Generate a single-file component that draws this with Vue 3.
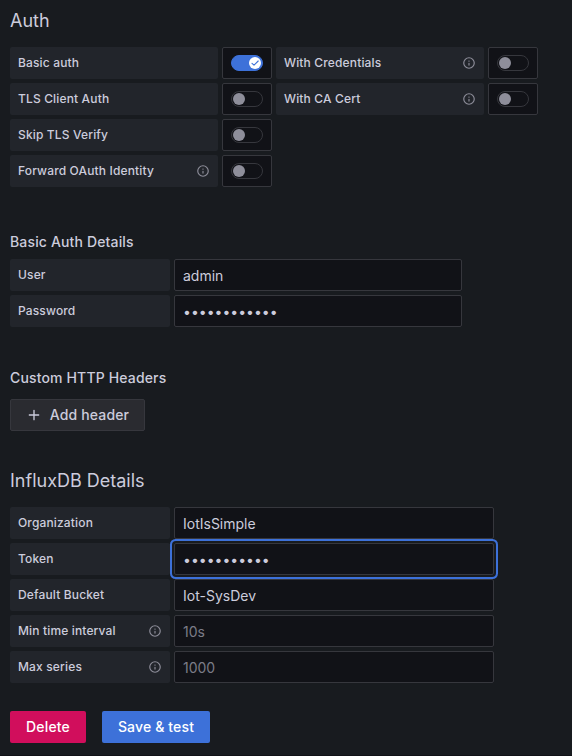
<script setup>
import { ref } from 'vue'

const authRows = ref([
  [
    { label: 'Basic auth', on: true },
    { label: 'With Credentials', info: true, on: false },
  ],
  [
    { label: 'TLS Client Auth', on: false },
    { label: 'With CA Cert', info: true, on: false },
  ],
  [{ label: 'Skip TLS Verify', on: false }],
  [{ label: 'Forward OAuth Identity', info: true, on: false }],
])

const basicFields = ref([
  { label: 'User', type: 'text', value: 'admin' },
  { label: 'Password', type: 'password', value: 'configured12' },
])

const influxFields = ref([
  { label: 'Organization', type: 'text', value: 'IotIsSimple' },
  { label: 'Token', type: 'password', value: 'tokenvalue1', active: true },
  { label: 'Default Bucket', type: 'text', value: 'Iot-SysDev' },
  { label: 'Min time interval', type: 'text', value: '', placeholder: '10s', info: true },
  { label: 'Max series', type: 'text', value: '', placeholder: '1000', info: true },
])

const infoPath =
  'M12,2A10,10,0,1,0,22,12,10.01114,10.01114,0,0,0,12,2Zm0,18a8,8,0,1,1,8-8A8.00917,8.00917,0,0,1,12,20Zm0-8.5a1,1,0,0,0-1,1v3a1,1,0,0,0,2,0v-3A1,1,0,0,0,12,11.5Zm0-4a1.25,1.25,0,1,0,1.25,1.25A1.25,1.25,0,0,0,12,7.5Z'
</script>

<template>
  <main class="page">
    <section class="auth">
      <h3 class="title">Auth</h3>
      <div class="rows">
        <div v-for="(row, i) in authRows" :key="i" class="row">
          <template v-for="item in row" :key="item.label">
            <div class="label wide">
              <span>{{ item.label }}</span>
              <svg v-if="item.info" class="info" viewBox="0 0 24 24"><path :d="infoPath" /></svg>
            </div>
            <div class="switch-box">
              <button
                type="button"
                role="switch"
                class="switch"
                :class="{ on: item.on }"
                :aria-checked="item.on"
                @click="item.on = !item.on"
              >
                <span class="knob">
                  <svg v-if="item.on" viewBox="0 0 12 12"><path d="M3 6.3 5 8.2 9.2 4" /></svg>
                </span>
              </button>
            </div>
          </template>
        </div>
      </div>
    </section>

    <section class="basic">
      <h6 class="subtitle">Basic Auth Details</h6>
      <div class="rows">
        <div v-for="field in basicFields" :key="field.label" class="row">
          <label class="label">{{ field.label }}</label>
          <input v-model="field.value" class="input short" :type="field.type" />
        </div>
      </div>
    </section>

    <section class="headers">
      <h6 class="subtitle">Custom HTTP Headers</h6>
      <button type="button" class="button secondary">
        <svg viewBox="0 0 24 24">
          <path d="M19,11H13V5a1,1,0,0,0-2,0v6H5a1,1,0,0,0,0,2h6v6a1,1,0,0,0,2,0V13h6a1,1,0,0,0,0-2Z" />
        </svg>
        <span>Add header</span>
      </button>
    </section>

    <section class="influx">
      <h3 class="title">InfluxDB Details</h3>
      <div class="rows">
        <div v-for="field in influxFields" :key="field.label" class="row">
          <label class="label">
            <span>{{ field.label }}</span>
            <svg v-if="field.info" class="info" viewBox="0 0 24 24"><path :d="infoPath" /></svg>
          </label>
          <input
            v-model="field.value"
            class="input"
            :class="{ active: field.active }"
            :type="field.type"
            :placeholder="field.placeholder"
          />
        </div>
      </div>
    </section>

    <footer class="actions">
      <button type="button" class="button danger">Delete</button>
      <button type="button" class="button primary">Save &amp; test</button>
    </footer>
  </main>
</template>

<style>
body {
  margin: 0;
  background: #181b1f;
}
</style>

<style scoped>
.page {
  box-sizing: border-box;
  height: 756px;
  overflow: hidden;
  padding: 9px 10px 0;
  border-bottom: 1px solid #111217;
  background: #181b1f;
  color: #ccccdc;
  font: 400 14px/22px Inter, sans-serif;
  letter-spacing: 0.15px;
}
.page * {
  box-sizing: border-box;
}
.title {
  margin: 0 0 14px;
  font-size: 18px;
  line-height: 24px;
  font-weight: 400;
  letter-spacing: 0;
}
.subtitle {
  margin: 0 0 6px;
  font-size: 14px;
  line-height: 22px;
  font-weight: 500;
}
.rows {
  display: flex;
  flex-direction: column;
  gap: 4px;
}
.row {
  display: flex;
  gap: 4px;
}
.label {
  display: flex;
  align-items: center;
  justify-content: space-between;
  width: 160px;
  height: 32px;
  padding: 0 8px;
  border-radius: 2px;
  background: #22252b;
  font-size: 12px;
  font-weight: 500;
  letter-spacing: 0.15px;
}
.label.wide {
  width: 208px;
}
.info {
  width: 14px;
  height: 14px;
  fill: #8e8e9a;
}
.switch-box {
  display: flex;
  align-items: center;
  justify-content: center;
  width: 50px;
  height: 32px;
  border: 1px solid #36373d;
  border-radius: 2px;
  background: #111217;
}
.switch {
  display: flex;
  align-items: center;
  width: 32px;
  height: 16px;
  padding: 0 1px;
  border: 1px solid #36373d;
  border-radius: 8px;
  background: #111217;
}
.switch.on {
  justify-content: flex-end;
  border-color: #3d71d9;
  background: #3d71d9;
}
.knob {
  display: flex;
  width: 12px;
  height: 12px;
  border-radius: 50%;
  background: #8e8e9a;
}
.on .knob {
  background: #fff;
}
.knob path {
  fill: none;
  stroke: #3d71d9;
  stroke-width: 1.1;
  stroke-linecap: round;
  stroke-linejoin: round;
}
.input {
  width: 320px;
  height: 32px;
  margin: 0;
  padding: 1px 8px 0;
  border: 1px solid #36373d;
  border-radius: 2px;
  outline: none;
  background: #111217;
  color: #ccccdc;
  font: inherit;
  letter-spacing: 0;
}
.input.short {
  width: 288px;
}
.input::placeholder {
  color: #7b7c87;
}
.input.active {
  z-index: 1;
  box-shadow: 0 0 0 2px #181b1f, 0 0 0 4px #3d71d9;
  position: relative;
}
.basic {
  margin-top: 44px;
}
.headers {
  margin-top: 40px;
}
.headers .subtitle {
  margin-bottom: 10px;
}
.influx {
  margin-top: 38px;
}
.button {
  display: flex;
  align-items: center;
  justify-content: center;
  height: 32px;
  padding: 0;
  border: 0;
  border-radius: 2px;
  color: #fff;
  font: inherit;
  font-weight: 500;
  letter-spacing: 0.15px;
}
.secondary {
  gap: 8px;
  width: 135px;
  border: 1px solid #36373d;
  background: #2a2b30;
  color: #ccccdc;
}
.secondary svg {
  width: 16px;
  height: 16px;
  fill: currentColor;
}
.actions {
  display: flex;
  gap: 16px;
  margin-top: 28px;
}
.danger {
  width: 76px;
  background: #d10e5c;
}
.primary {
  width: 108px;
  background: #3d71d9;
}
</style>
